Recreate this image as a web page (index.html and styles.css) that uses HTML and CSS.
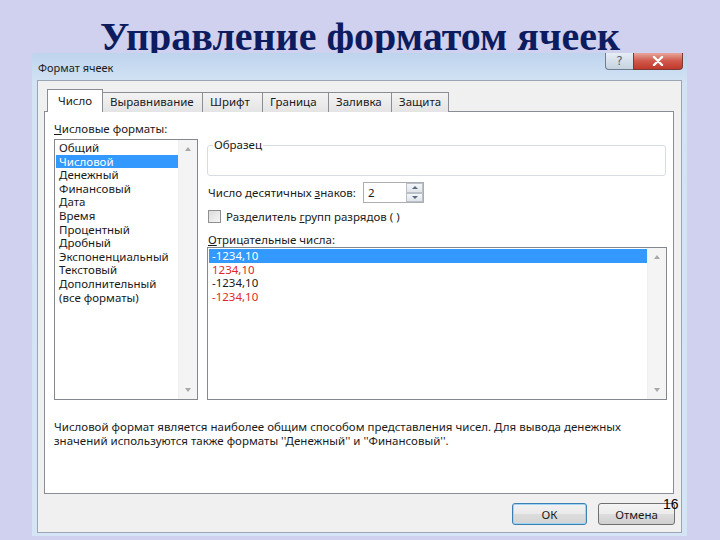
FILE: index.html
```html
<!DOCTYPE html>
<html lang="ru">
<head>
<meta charset="utf-8">
<title>Управление форматом ячеек</title>
<link rel="stylesheet" href="styles.css">
</head>
<body>
<div class="slide">
  <h1 class="title">Управление форматом ячеек</h1>
  <div class="dialog">
    <div class="titlebar">
      <span class="caption">Формат ячеек</span>
      <div class="wbtns">
        <span class="wbtn help">?</span>
        <span class="wbtn close"><svg width="12" height="10" viewBox="0 0 12 10"><path d="M2 1 L10 9 M10 1 L2 9" stroke="#fff" stroke-width="2.4" stroke-linecap="round"/></svg></span>
      </div>
    </div>
    <div class="panel">
      <div class="tabs">
        <span class="tab active">Число</span>
        <span class="tab">Выравнивание</span>
        <span class="tab">Шрифт</span>
        <span class="tab">Граница</span>
        <span class="tab">Заливка</span>
        <span class="tab">Защита</span>
      </div>
      <div class="page">
        <div class="cols">
          <div class="leftcol">
            <div class="lbl"><u>Ч</u>исловые форматы:</div>
            <div class="listbox fmtlist">
              <ul class="items">
                <li>Общий</li>
                <li class="sel">Числовой</li>
                <li>Денежный</li>
                <li>Финансовый</li>
                <li>Дата</li>
                <li>Время</li>
                <li>Процентный</li>
                <li>Дробный</li>
                <li>Экспоненциальный</li>
                <li>Текстовый</li>
                <li>Дополнительный</li>
                <li>(все форматы)</li>
              </ul>
              <div class="sbar"><span class="arr up"></span><span class="arr down"></span></div>
            </div>
          </div>
          <div class="rightcol">
            <fieldset class="sample"><legend>Образец</legend></fieldset>
            <div class="decrow">
              <span class="declbl">Число десятичных <u>з</u>наков:</span>
              <div class="spin">
                <span class="spinval">2</span>
                <div class="spinbtns"><span class="sb"><span class="arr up sm"></span></span><span class="sb"><span class="arr down sm"></span></span></div>
              </div>
            </div>
            <div class="chkrow"><span class="chk"></span><span>Разделитель <u>г</u>рупп разрядов ( )</span></div>
            <div class="lbl neglbl"><u>О</u>трицательные числа:</div>
            <div class="listbox neglist">
              <ul class="items">
                <li class="sel">-1234,10</li>
                <li class="red">1234,10</li>
                <li>-1234,10</li>
                <li class="red">-1234,10</li>
              </ul>
              <div class="sbar"><span class="arr up"></span><span class="arr down"></span></div>
            </div>
          </div>
        </div>
        <p class="desc">Числовой формат является наиболее общим способом представления чисел. Для вывода денежных значений используются также форматы ''Денежный'' и ''Финансовый''.</p>
      </div>
      <div class="btnrow">
        <span class="btn ok">ОК</span>
        <span class="btn">Отмена</span>
      </div>
    </div>
  </div>
  <span class="pagenum">16</span>
</div>
</body>
</html>
```
FILE: styles.css
```css
* { box-sizing: border-box; }
html, body { margin: 0; padding: 0; }
body {
  width: 720px;
  height: 540px;
  background: #d0d0ef;
  overflow: hidden;
  font-family: "Noto Sans", "Open Sans", sans-serif;
}
.slide { position: relative; width: 720px; height: 540px; }
.title {
  margin: 0;
  height: 53px;
  padding-top: 17px;
  font-family: "Liberation Serif", "Times New Roman", serif;
  font-weight: bold;
  font-size: 40px;
  line-height: 40px;
  color: #0c1c5e;
  text-align: center;
  white-space: nowrap;
}
.dialog {
  position: relative;
  margin-left: 32px;
  width: 655px;
  height: 483px;
  background: linear-gradient(to bottom, #bed4ed 0, #d3e3f4 30px, #d6e5f5 100%);
  display: flex;
  flex-direction: column;
  padding: 0 5px 3px 5px;
  border-radius: 3px 3px 0 0;
}
.titlebar {
  height: 27px;
  display: flex;
  justify-content: space-between;
  align-items: flex-start;
  font-size: 11px;
  color: #1c1c1c;
}
.caption { padding: 7px 0 0 1px; }
.wbtns { display: flex; margin-top: 0; margin-right: -1px; }
.wbtn {
  height: 17px;
  display: flex;
  align-items: center;
  justify-content: center;
  border: 1px solid #6f7d8f;
  border-top: none;
}
.help {
  width: 28px;
  background: linear-gradient(to bottom, #e6edf5, #c5d2e0);
  color: #5a6470;
  font-size: 12px;
  font-family: "DejaVu Sans", sans-serif;
  border-radius: 0 0 0 4px;
  border-right: none;
}
.close {
  width: 50px;
  background: linear-gradient(to bottom, #e7a59c 0, #d0584a 50%, #c0392b 100%);
  border-color: #7a3b34;
  border-radius: 0 0 4px 0;
}
.panel {
  flex: 1;
  background: #f0f0f0;
  border: 1px solid #9aa6b4;
  display: flex;
  flex-direction: column;
  padding: 8px 7px 0 6px;
}
.tabs {
  display: flex;
  align-items: flex-end;
  height: 23px;
  padding-left: 3px;
  position: relative;
  z-index: 1;
  margin-bottom: -1px;
}
.tab {
  height: 20px;
  padding: 0 7px;
  font-size: 11.5px;
  line-height: 18px;
  color: #1a1a1a;
  border: 1px solid #8a8d96;
  border-bottom: none;
  border-left: none;
  background: linear-gradient(to bottom, #f3f3f3, #e4e4e4);
  white-space: nowrap;
}
.tab.active {
  height: 23px;
  width: 56px;
  text-align: center;
  padding: 2px 0 0;
  background: #fff;
  border-left: 1px solid #8a8d96;
  border-right: 1px solid #8a8d96;
}
.tabs .tab:nth-child(2) { width: 100px; }
.tabs .tab:nth-child(3) { width: 60px; }
.tabs .tab:nth-child(4) { width: 66px; }
.tabs .tab:nth-child(5) { width: 63px; }
.tabs .tab:nth-child(6) { width: 57px; }
.page {
  height: 383px;
  background: #fff;
  border: 1px solid #8a8d96;
  padding: 10px 6px 0 9px;
  font-size: 11.5px;
  color: #1a1a1a;
}
.cols {
  display: grid;
  grid-template-columns: 144px 459px;
  column-gap: 10px;
  align-items: start;
}
.lbl { height: 17px; line-height: 13px; white-space: nowrap; }
.listbox {
  display: flex;
  border: 1px solid #828790;
  background: #fff;
}
.fmtlist { height: 261px; }
.neglist { height: 153px; }
.items {
  list-style: none;
  margin: 0;
  padding: 1px 0 0 1px;
  flex: 1;
}
.items li {
  height: 13.6px;
  line-height: 13.6px;
  padding-left: 3px;
  white-space: nowrap;
}
.items li.sel { background: #3399ff; color: #fff; }
.items li.red { color: #e0282a; }
.sbar {
  width: 19px;
  background: #f4f4f4;
  border-left: 1px solid #f0f0f0;
  display: flex;
  flex-direction: column;
  justify-content: space-between;
  align-items: center;
  padding: 7px 0 7px;
}
.arr {
  width: 0;
  height: 0;
  border-left: 3.5px solid transparent;
  border-right: 3.5px solid transparent;
}
.arr.up { border-bottom: 4px solid #a8a8a8; }
.arr.down { border-top: 4px solid #a8a8a8; }
.arr.sm { border-left-width: 3px; border-right-width: 3px; }
.arr.sm.up { border-bottom: 3px solid #5a6a80; }
.arr.sm.down { border-top: 3px solid #5a6a80; }
.rightcol { display: flex; flex-direction: column; }
.sample {
  margin: 17px 0 0 -1px;
  width: 459px;
  height: 37px;
  border: 1px solid #d6dde3;
  border-radius: 3px;
  padding: 0;
}
.sample legend {
  padding: 0 1px;
  margin-left: 5px;
  line-height: 12px;
}
.decrow {
  display: flex;
  align-items: center;
  margin-top: 6px;
  height: 21px;
}
.declbl { width: 155px; white-space: nowrap; }
.spin {
  width: 61px;
  height: 21px;
  border: 1px solid #abadb3;
  display: flex;
  justify-content: space-between;
}
.spinval { padding: 2px 0 0 4px; }
.spinbtns { width: 17px; display: flex; flex-direction: column; }
.sb {
  flex: 1;
  display: flex;
  align-items: center;
  justify-content: center;
  background: linear-gradient(to bottom, #f4f6f9, #dfe4ea);
  border: 1px solid #b9c0c8;
}
.chkrow {
  display: flex;
  align-items: center;
  gap: 5px;
  margin-top: 6px;
  height: 14px;
  white-space: nowrap;
}
.chk {
  width: 13px;
  height: 13px;
  border: 1px solid #8f8f8f;
  background: linear-gradient(135deg, #dcdcdc, #f6f6f6);
}
.neglbl { margin-top: 10px; height: 13px; }
.neglist { margin-top: 1px; margin-left: -1px; }
.desc {
  margin: 20px 0 0;
  line-height: 14px;
  width: 600px;
}
.btnrow {
  display: flex;
  justify-content: flex-end;
  gap: 11px;
  padding: 9px 0 0;
  margin-right: -1px;
}
.btn {
  width: 77px;
  height: 22px;
  display: flex;
  align-items: center;
  justify-content: center;
  font-size: 11.5px;
  color: #1a1a1a;
  border: 1px solid #707070;
  border-radius: 3px;
  background: linear-gradient(to bottom, #f4f4f4 0, #ebebeb 50%, #dddddd 51%, #cfcfcf 100%);
}
.btn.ok {
  width: 75px;
  border: 1px solid #3c7fb1;
  box-shadow: inset 0 0 0 1px #9fd4f2;
  background: linear-gradient(to bottom, #f2f2f2 0, #e9e9e9 50%, #dcdcdc 51%, #d4d4d4 100%);
}
.pagenum {
  position: absolute;
  left: 663px;
  top: 496px;
  font-family: "Liberation Sans", Arial, sans-serif;
  font-size: 14px;
  color: #000;
}
```
